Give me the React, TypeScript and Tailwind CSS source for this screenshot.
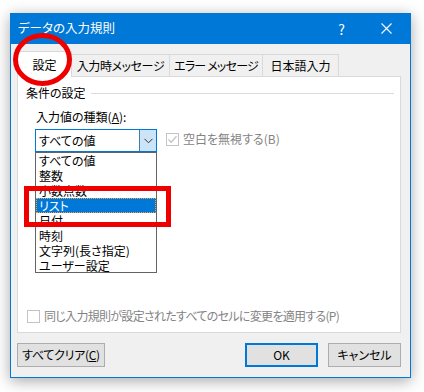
import React from 'react';

const font = "font-['Noto_Sans_CJK_JP','Liberation_Sans',sans-serif] [font-feature-settings:'palt']";

const items = ['すべての値', '整数', '小数点数', 'リスト', '日付', '時刻', '文字列(長さ指定)', 'ユーザー設定'];

const Check = ({ checked }: { checked?: boolean }) => (
  <div className="w-[13px] h-[13px] border border-[#c4c4c4] bg-white flex items-center justify-center">
    {checked && (
      <svg width="11" height="11" viewBox="0 0 11 11">
        <path d="M1.5 5.5 L4.2 8.3 L9.5 2.2" fill="none" stroke="#c4c4c4" strokeWidth="1.3" />
      </svg>
    )}
  </div>
);

const App = () => {
  return (
    <div className={`relative w-[424px] h-[392px] bg-white pt-[13px] pl-[10px] overflow-hidden text-[12px] text-black ${font}`}>
      <div className="w-[401px] h-[365px] flex flex-col bg-[#f0f0f0] border border-t-0 border-[#0078d7] shadow-[0_3px_14px_rgba(0,0,0,0.35)]">
        {/* title bar */}
        <div className="h-[31px] bg-[#0078d7] flex items-center pl-[8px] text-white -mx-px">
          <span className="text-[12.5px] leading-none">データの入力規則</span>
          <span className="ml-auto mr-[36px] text-[14px] leading-none">?</span>
          <svg width="11" height="11" viewBox="0 0 11 11" className="mr-[19px]">
            <path d="M0.5 0.5 L10.5 10.5 M10.5 0.5 L0.5 10.5" stroke="white" strokeWidth="1.1" />
          </svg>
        </div>

        <div className="px-[6px] pt-[7px]">
          {/* tabs */}
          <div className="flex items-end h-[25px]">
            <div className="relative z-10 -mb-px w-[55px] h-[26px] bg-white border border-b-0 border-[#d9d9d9] flex items-center justify-center">
              設定
            </div>
            <div className="w-[98px] h-[22px] border border-b-0 border-l-0 border-[#d9d9d9] flex items-center justify-center tracking-[-0.4px]">
              入力時メッセージ
            </div>
            <div className="w-[93px] h-[22px] border border-b-0 border-l-0 border-[#d9d9d9] flex items-center justify-center tracking-[-0.8px]">
              エラー メッセージ
            </div>
            <div className="w-[76px] h-[22px] border border-b-0 border-l-0 border-[#d9d9d9] flex items-center justify-center">
              日本語入力
            </div>
          </div>

          {/* panel */}
          <div className="w-[384px] h-[257px] bg-white border border-[#d9d9d9] flex flex-col pl-[8px] pt-[8px]">
            <div className="flex items-center h-[16px]">
              <span>条件の設定</span>
              <div className="flex-1 h-px bg-[#dcdcdc] ml-[5px] mr-[6px]" />
            </div>
            <div className="ml-[10px] mt-[8px] h-[16px] leading-[16px]">
              入力値の種類(<span className="underline">A</span>):
            </div>
            <div className="flex items-start ml-[9px] mt-[4px]">
              <div className="relative w-[122px] h-[23px] border border-[#0078d7] bg-white flex items-center">
                <span className="pl-[3px]">すべての値</span>
                <div className="ml-auto w-[17px] h-[21px] bg-[#cce4f7] border-l border-[#3c7fb1] flex items-center justify-center">
                  <svg width="9" height="6" viewBox="0 0 9 6">
                    <path d="M0.5 0.8 L4.5 4.8 L8.5 0.8" fill="none" stroke="#333" strokeWidth="1" />
                  </svg>
                </div>
                {/* dropdown list */}
                <div className="absolute left-[-1px] top-[22px] w-[122px] h-[121px] border border-[#646464] bg-white z-20 leading-[15px]">
                  {items.map((it) =>
                    it === 'リスト' ? (
                      <div
                        key={it}
                        className="h-[15px] leading-[13px] pl-[2px] bg-[#0078d7] text-white border border-dotted border-[#f0a040] overflow-hidden"
                      >
                        {it}
                      </div>
                    ) : (
                      <div key={it} className="h-[15px] leading-[15px] pl-[3px] overflow-hidden">
                        {it}
                      </div>
                    )
                  )}
                </div>
              </div>
              <div className="flex items-center ml-[9px] mt-[1px] gap-[4px] text-[#838383]">
                <Check checked />
                <span>空白を無視する(B)</span>
              </div>
            </div>

            <div className="mt-auto mb-[8px] ml-[1px] flex items-center gap-[4px] text-[#838383] h-[16px]">
              <Check />
              <span className="tracking-[-0.7px]">同じ入力規則が設定されたすべてのセルに変更を適用する(P)</span>
            </div>
          </div>

          {/* buttons */}
          <div className="w-[384px] flex mt-[10px]">
            <button className="w-[88px] h-[24px] bg-[#e1e1e1] border border-[#adadad] tracking-[-0.3px]">
              すべてクリア(<span className="underline">C</span>)
            </button>
            <button className="ml-auto w-[73px] h-[24px] bg-[#e1e1e1] border-2 border-[#0078d7]">OK</button>
            <button className="ml-[10px] w-[73px] h-[24px] bg-[#e1e1e1] border border-[#adadad]">キャンセル</button>
          </div>
        </div>
      </div>

      {/* red annotations */}
      <svg className="absolute left-0 top-0 z-30 pointer-events-none" width="424" height="392" viewBox="0 0 424 392">
        <ellipse cx="42.5" cy="59.5" rx="27" ry="24" fill="none" stroke="#ee0000" strokeWidth="5" />
      </svg>
      <div className="absolute z-30 left-[24px] top-[186px] w-[147px] h-[41px] border-[5px] border-[#ee0000]" />
    </div>
  );
};

export default App;
